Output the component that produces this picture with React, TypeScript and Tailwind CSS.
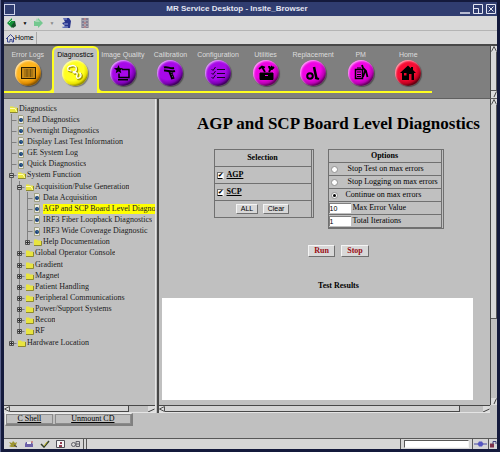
import { useState, type ReactNode } from "react";

type TreeNode = { label: string; level: number; kind: "leaf" | "open" | "closed" };

const TREE: TreeNode[] = [
  { label: "Diagnostics", level: 0, kind: "open" },
  { label: "End Diagnostics", level: 1, kind: "leaf" },
  { label: "Overnight Diagnostics", level: 1, kind: "leaf" },
  { label: "Display Last Test Information", level: 1, kind: "leaf" },
  { label: "GE System Log", level: 1, kind: "leaf" },
  { label: "Quick Diagnostics", level: 1, kind: "leaf" },
  { label: "System Function", level: 1, kind: "open" },
  { label: "Acquisition/Pulse Generation", level: 2, kind: "open" },
  { label: "Data Acquisition", level: 3, kind: "leaf" },
  { label: "AGP and SCP Board Level Diagnostics", level: 3, kind: "leaf" },
  { label: "IRF3 Fiber Loopback Diagnostics", level: 3, kind: "leaf" },
  { label: "IRF3 Wide Coverage Diagnostic", level: 3, kind: "leaf" },
  { label: "Help Documentation", level: 3, kind: "closed" },
  { label: "Global Operator Console", level: 2, kind: "closed" },
  { label: "Gradient", level: 2, kind: "closed" },
  { label: "Magnet", level: 2, kind: "closed" },
  { label: "Patient Handling", level: 2, kind: "closed" },
  { label: "Peripheral Communications", level: 2, kind: "closed" },
  { label: "Power/Support Systems", level: 2, kind: "closed" },
  { label: "Recon", level: 2, kind: "closed" },
  { label: "RF", level: 2, kind: "closed" },
  { label: "Hardware Location", level: 1, kind: "closed" },
];

const ORANGE = "bg-[radial-gradient(circle_at_40%_35%,#ffb51f_45%,#e08c00_62%,#8a5600_72%)]";
const YELLOW = "bg-[radial-gradient(circle_at_40%_35%,#ffff20_50%,#e8e000_64%,#9a9400_72%)]";
const PURPLE = "bg-[radial-gradient(circle_at_40%_35%,#a808e8_45%,#7c00b4_62%,#40005e_72%)]";
const MAGENTA = "bg-[radial-gradient(circle_at_40%_35%,#f004e4_45%,#bb00b4_62%,#66005f_72%)]";
const RED = "bg-[radial-gradient(circle_at_40%_35%,#f80c34_45%,#c40020_62%,#640010_72%)]";

const TABS: { label: string; ball: string; icon: ReactNode }[] = [
  {
    label: "Error Logs",
    ball: ORANGE,
    icon: (
      <g fill="none" stroke="#2a1c00">
        <rect x="6.5" y="7.5" width="14" height="11" fill="#c98a18" />
        <path d="M9 10h9M9 12h9M9 14h9M9 16h9M12 9v8M15.500 9v8" stroke="#5c420c" strokeWidth=".6" />
      </g>
    ),
  },
  {
    label: "Diagnostics",
    ball: YELLOW,
    icon: (
      <g fill="none" strokeLinecap="round" strokeLinejoin="round">
        <path d="M7 11c-1-3 1-4 3-4M10 7c2-1 4 0 5 1M12 13c3 0 4-2 3-5M7 11l3 1M13 14c2-1 4 0 3 2s0 4 2 3 3-3 1-5" stroke="#aaa200" strokeWidth="2" />
        <path d="M6 10c-1-3 1-4 3-4M9 6c2-1 4 0 5 1M11 12c3 0 4-2 3-5M6 10l3 1M12 13c2-1 4 0 3 2s0 4 2 3 3-3 1-5" stroke="#fff" strokeWidth="1.300" />
      </g>
    ),
  },
  {
    label: "Image Quality",
    ball: PURPLE,
    icon: (
      <g fill="none" stroke="#000" strokeWidth="1.500">
        <path d="M12 9.500h7v8H9v-4M8 19.700h10" />
        <path d="M8.500 5l1.200 3 3.300.3-2.500 2 .8 3-2.800-1.700-2.800 1.700.8-3-2.500-2 3.300-.3z" fill="#000" stroke="none" />
      </g>
    ),
  },
  {
    label: "Calibration",
    ball: PURPLE,
    icon: (
      <g fill="none" stroke="#000">
        <path d="M7 7.500c3-1.500 6 1.500 10 .5M7 10.500c4-.5 6 2 11 .5" strokeWidth="2" />
        <path d="M13 11l3 8" strokeWidth="3.500" />
        <path d="M14 12l2 6" stroke="#8f60b0" strokeWidth=".8" strokeDasharray="1 1" />
      </g>
    ),
  },
  {
    label: "Configuration",
    ball: PURPLE,
    icon: (
      <g fill="none" stroke="#180028">
        <path d="M12 9.500h8M12 13.500h8M12 17.500h8" strokeWidth="1.200" />
        <path d="M6.500 9l1.500 1.500L10.500 7M6.500 13l1.500 1.500 2.500-3.500M6.500 17l1.500 1.500 2.500-3.500" />
      </g>
    ),
  },
  {
    label: "Utilities",
    ball: MAGENTA,
    icon: (
      <g fill="none" stroke="#000">
        <path d="M7 13h13v6.500H7z" fill="#000" />
        <path d="M12 15.500h3" stroke="#f004e4" />
        <path d="M6 9l3-2.500 3 1M9 7l3 5M19 6l-3 6M16 6c0 2 1 3 3 3l2-2" strokeWidth="1.800" />
      </g>
    ),
  },
  {
    label: "Replacement",
    ball: MAGENTA,
    icon: (
      <g fill="none" stroke="#000">
        <circle cx="10" cy="16" r="2.800" strokeWidth="2" />
        <path d="M14 7l2.500 11.500" strokeWidth="2.500" />
        <path d="M15 18l4 1" strokeWidth="2" />
      </g>
    ),
  },
  {
    label: "PM",
    ball: MAGENTA,
    icon: (
      <g fill="none" stroke="#000">
        <path d="M7.500 9.500h7v9h-7z" strokeWidth="1.500" />
        <path d="M9 12h4M9 14.500h4M9 16.500h4M9 8h4" />
        <path d="M14 5l1 3 3 3 1.500 6M17 11l-2 6" strokeWidth="1.800" />
      </g>
    ),
  },
  {
    label: "Home",
    ball: RED,
    icon: (
      <g>
        <path d="M13 5.500L5 13h2v7h12v-7h2l-3-3V7h-2v1.500z" />
        <path d="M9 13h2.500v2.500H9zM14 14h2.500v6H14z" fill="#e8082c" />
      </g>
    ),
  },
];

// true when the guide line at `depth` carries on below row `i`
function continues(i: number, depth: number) {
  for (let j = i + 1; j < TREE.length; j++) {
    if (TREE[j].level < depth) return false;
    if (TREE[j].level === depth) return true;
  }
  return false;
}

export default function App() {
  return (
    <div className="flex min-h-screen flex-col border-l border-[#5a628c] bg-[#141a3c] pt-0.5 pr-[3px] pb-[3px] pl-[3px] font-['Liberation_Serif',serif] text-[8px] leading-[10px] text-black">
      <TitleBar />
      <Toolbar />
      <nav className="flex h-[54px] border-t-2 border-[#484848] bg-[#7f7f7f]">
        <div className="flex-1">
          <TabStrip />
        </div>
        <VScroll thumb="flex-1" />
      </nav>
      <main className="flex flex-1 border-t border-[#606060] bg-[#c0c0c0]">
        <div className="flex w-[151px] shrink-0 flex-col">
          <div className="flex-1">
            <Tree />
          </div>
          <HScroll thumb="w-[119px]" />
        </div>
        <div className="w-[4px] shrink-0 border-r-2 border-l border-r-[#484848] border-l-[#e4e4e4]" />
        <div className="flex min-w-0 flex-1">
          <div className="flex min-w-0 flex-1 flex-col">
            <BoardDiagnostics />
            <HScroll thumb="mr-[23px] flex-1" />
          </div>
          <div className="flex pb-2">
            <VScroll thumb="h-[214px]" />
          </div>
        </div>
      </main>
      <footer className="bg-[#c0c0c0] px-px pb-3">
        <div className="flex w-32 border-t border-r-2 border-b-2 border-l border-t-[#ececec] border-r-[#808080] border-b-[#808080] border-l-[#ececec] text-center leading-[8px]">
          <a href="#shell" className="mr-0.5 flex-3 border border-[#8c8c8c] underline">C Shell</a>
          <a href="#unmount" className="flex-5 border border-[#8c8c8c] underline">Unmount CD</a>
        </div>
      </footer>
      <StatusBar />
    </div>
  );
}

function TitleBar() {
  return (
    <header className="flex h-[14px] items-center bg-[#303d70] text-[#e4e6f2]">
      <button aria-label="Window menu" className="h-[11px] w-[11px] border border-[#cfd4ea]" />
      <h1 className="flex-1 pr-px text-center font-['Liberation_Sans',sans-serif] text-[8px] font-bold">
        MR Service Desktop - Insite_Browser
      </h1>
      <div className="flex gap-[3px] pr-px">
        <button aria-label="Minimize">
          <svg width="10" height="10" className="block"><path d="M0 9h10" stroke="#e4e6f2" strokeWidth="1.500" /></svg>
        </button>
        <button aria-label="Restore">
          <svg width="10" height="10" className="block" fill="none" stroke="#e4e6f2"><path d="M.5.500h9v9h-9zM.5 4.500h5v5" /></svg>
        </button>
        <button aria-label="Close">
          <svg width="10" height="10" className="block" fill="none" stroke="#e4e6f2"><path d="M.5.500h9v9h-9zM2.500 2.500l5 5M7.500 2.500l-5 5" /></svg>
        </button>
      </div>
    </header>
  );
}

function Toolbar() {
  return (
    <div className="bg-[#d9d9d9] font-['Liberation_Sans',sans-serif] text-[7px]">
      <div className="flex h-[15px] items-center border-b border-[#b4b4b4] pl-0.5">
        <button aria-label="Back">
          <svg width="12" height="12" className="block">
            <path d="M1 6l5-5v3h3v5H6v2z" fill="#129438" />
            <path d="M5 9l4-5 1 5-3 2z" fill="#17542c" />
            <path d="M3 6l3-3" stroke="#8fe0a0" />
          </svg>
        </button>
        <span className="w-[14px] text-center text-[5px]">▼</span>
        <button aria-label="Forward">
          <svg width="12" height="12" className="block">
            <path d="M11 6L6 1v3H2v5h4v2z" fill="#74c890" />
            <path d="M3 5l2-4 3 4" fill="#a4d8b4" />
          </svg>
        </button>
        <span className="w-4 text-center text-[5px] text-[#888]">▼</span>
        <button aria-label="Reload">
          <svg width="12" height="12" className="block">
            <path d="M3 1h6l2 3-1 7H2l3-2-3-3 3-1z" fill="#28348c" />
            <path d="M3 2l4 0M4 7h4M2 10h6" stroke="#9aa8dc" />
          </svg>
        </button>
        <button aria-label="Stop loading" className="ml-2">
          <svg width="10" height="12" className="block">
            <path d="M1 1h8v10H1z" fill="#a6a4ae" />
            <path d="M3 1v10M7 1v10" stroke="#5c587c" strokeDasharray="2 1" />
            <path d="M5 1v10" stroke="#c46464" strokeDasharray="2 2" />
          </svg>
        </button>
      </div>
      <div className="flex h-[13px] items-center">
        <a href="#home" className="flex h-3 items-center border-r border-[#a8a8a8] pr-0.5 pl-px">
          <svg width="10" height="10" className="block" fill="none" stroke="#3c4890">
            <path d="M1 6l4.500-4.500L10 6M2.500 5v4H5V6.500h2V9h1.500V5" />
          </svg>
          Home
        </a>
      </div>
    </div>
  );
}

function TabStrip() {
  const [active, setActive] = useState("Diagnostics");
  return (
    <div className="grid h-[47px] w-[428px] grid-cols-9 font-['Liberation_Sans',sans-serif] text-[7px] leading-[8px]">
      {TABS.map((tab) => {
        const on = tab.label === active;
        return (
          <button
            key={tab.label}
            onClick={() => setActive(tab.label)}
            className={`relative flex flex-col items-center gap-px border-[#ffff20] whitespace-nowrap ${
              on ? "rounded-t-md border-x-2 border-t-2 bg-[#c0c0c0] pt-[3px] text-black" : "border-b-2 pt-[5px] text-[#dcdcdc]"
            }`}
          >
            {on && (
              <>
                <span className="absolute bottom-0 -left-[6px] h-[6px] w-[6px] rounded-br-md border-r-2 border-b-2 border-[#ffff20]" />
                <span className="absolute -right-[6px] bottom-0 h-[6px] w-[6px] rounded-bl-md border-b-2 border-l-2 border-[#ffff20]" />
              </>
            )}
            {tab.label}
            <span className={`h-[26px] w-[26px] shrink-0 rounded-full shadow-[inset_1px_1px_2px_#ffffffb0,1px_1px_1px_#00000060] ${tab.ball}`}>
              <svg viewBox="0 0 26 26" className="block h-full w-full">{tab.icon}</svg>
            </span>
          </button>
        );
      })}
    </div>
  );
}

function Tree() {
  const [selected, setSelected] = useState("AGP and SCP Board Level Diagnostics");
  return (
    <ul className="flex h-[249px] flex-col pt-[4px] pl-1 text-[#202020]">
      {TREE.map((node, i) => (
        <li key={node.label} className="flex min-h-0 flex-1 items-center">
          {Array.from({ length: node.level }, (_, d) => (
            <Guide
              key={d}
              below={continues(i, d + 1)}
              own={d + 1 === node.level}
              box={d + 1 === node.level && node.kind !== "leaf" ? node.kind : undefined}
            />
          ))}
          <span className="flex w-[11px] shrink-0 pl-px">
            {node.kind === "leaf" ? <PageIcon /> : <FolderIcon open={node.kind === "open"} />}
          </span>
          <button
            onClick={() => setSelected(node.label)}
            className={`overflow-hidden text-left whitespace-nowrap ${
              node.label === selected ? "flex-1 bg-[#ffff00]" : ""
            }`}
          >
            {node.label}
          </button>
        </li>
      ))}
    </ul>
  );
}

function Guide({ below, own, box }: { below: boolean; own: boolean; box?: "open" | "closed" }) {
  return (
    <svg viewBox="0 0 8 12" className="h-3 w-2 shrink-0 overflow-visible" fill="none" stroke="#808080">
      {(below || own) && <path d={below ? "M3.500 0v12" : "M3.500 0v6"} />}
      {own && <path d="M3.500 6.500h5" />}
      {box && <path d="M1.500 4.500h4v4h-4z" fill="#c0c0c0" stroke="#505050" />}
      {box && <path d={box === "open" ? "M2 6.500h3" : "M2 6.500h3M3.500 5v3"} stroke="#303030" />}
    </svg>
  );
}

function FolderIcon({ open }: { open: boolean }) {
  return (
    <svg width="9" height="8" className="block">
      <path d="M1 1.500h3l1 1h3V7H1z" fill="#e8e440" />
      <path d="M1 7.500h7.500V3" fill="none" stroke="#8c8830" />
      {open && <path d="M1 3.500h5L8 7" fill="none" stroke="#fffdb0" />}
    </svg>
  );
}

function PageIcon() {
  return (
    <svg width="8" height="9" className="block">
      <path d="M1.500.500h4l1 1v7h-5z" fill="#ecece0" stroke="#8a8a60" strokeWidth=".7" />
      <circle cx="4" cy="5" r="2" fill="#183878" />
      <path d="M3.500 4.500h1v1" stroke="#40a090" fill="none" strokeWidth=".7" />
    </svg>
  );
}

function VScroll({ thumb }: { thumb: string }) {
  return (
    <div className="flex w-[7px] shrink-0 flex-col justify-between border-l border-[#484848] bg-[#c0c0c0]">
      <div className="flex flex-1 flex-col">
        <svg width="6" height="6" className="block"><path d="M0 0h6v6H0z" fill="#dcdcdc" /><path d="M.5 5.500L3 .5l2.500 5" fill="none" stroke="#505050" /></svg>
        <div className={`border-r border-b border-[#585858] bg-[#d8d8d8] ${thumb}`} />
      </div>
      <svg width="6" height="7" className="block"><path d="M0 0h6v7H0z" fill="#dcdcdc" /><path d="M5.500.500L3 6" stroke="#404040" /></svg>
    </div>
  );
}

function HScroll({ thumb }: { thumb: string }) {
  return (
    <div className="flex h-[8px] shrink-0 border-t border-b border-t-[#484848] border-b-[#e4e4e4] bg-[#c0c0c0]">
      <svg width="6" height="6" className="block shrink-0"><path d="M0 0h6v6H0z" fill="#dcdcdc" /><path d="M5.500.500L.5 3l5 2.500z" fill="none" stroke="#505050" /></svg>
      <div className={`border-r border-b border-[#484848] bg-[#d4d4d4] ${thumb}`} />
      <svg width="7" height="6" className="ml-auto block shrink-0"><path d="M0 0h7v6H0z" fill="#dcdcdc" /><path d="M6.500 3L0 6" stroke="#404040" /></svg>
    </div>
  );
}

const CELL = "border-b border-[#707070]";
const RADIO =
  "h-[7px] w-[7px] shrink-0 appearance-none rounded-full border border-[#909090] bg-white checked:before:block checked:before:h-[3px] checked:before:w-[3px] checked:before:translate-x-px checked:before:translate-y-px checked:before:rounded-full checked:before:bg-black checked:before:content-['']";
const PUSH = "border border-t-[#f4f4f4] border-r-[#707070] border-b-[#707070] border-l-[#f4f4f4] bg-[#d8d8d8]";

function BoardDiagnostics() {
  const [boards, setBoards] = useState<string[]>(["AGP", "SCP"]);
  const [mode, setMode] = useState("Continue on max errors");

  function toggle(name: string) {
    setBoards((prev) => (prev.includes(name) ? prev.filter((b) => b !== name) : [...prev, name]));
  }

  return (
    <section className="flex flex-1 flex-col overflow-hidden">
      <h2 className="-mr-7 pt-[15px] text-center text-[17px] leading-5 font-bold whitespace-nowrap">
        AGP and SCP Board Level Diagnostics
      </h2>
      <div className="mt-[15px] flex items-start justify-center gap-3.5 pl-2">
        <table className="w-[100px] border-separate border-spacing-0 border border-[#707070] pr-px">
          <thead>
            <tr>
              <th className={`h-[17px] border-r p-0 ${CELL}`}>Selection</th>
            </tr>
          </thead>
          <tbody>
            {["AGP", "SCP"].map((name) => (
              <tr key={name}>
                <td className={`h-[17px] border-r p-0 ${CELL}`}>
                  <label className="flex items-center gap-[3px] pl-0.5 font-bold underline">
                    <input
                      type="checkbox"
                      checked={boards.includes(name)}
                      onChange={() => toggle(name)}
                      className="h-[7px] w-[7px] appearance-none border border-t-[#707070] border-r-[#e8e8e8] border-b-[#e8e8e8] border-l-[#707070] bg-white checked:before:block checked:before:text-[6px] checked:before:leading-[5px] checked:before:content-['✔']"
                    />
                    {name}
                  </label>
                </td>
              </tr>
            ))}
            <tr>
              <td className="h-4 border-r border-[#707070] p-0">
                <div className="flex justify-center gap-[5px] font-['Liberation_Sans',sans-serif] text-[7px] leading-[8px]">
                  <button onClick={() => setBoards(["AGP", "SCP"])} className={`w-[22px] ${PUSH}`}>ALL</button>
                  <button onClick={() => setBoards([])} className={`w-[26px] ${PUSH}`}>Clear</button>
                </div>
              </td>
            </tr>
          </tbody>
        </table>

        <table className="w-[116px] border-separate border-spacing-0 border border-[#707070] pr-px">
          <thead>
            <tr>
              <th className={`h-[13px] border-r p-0 ${CELL}`}>Options</th>
            </tr>
          </thead>
          <tbody>
            {["Stop Test on max errors", "Stop Logging on max errors", "Continue on max errors"].map((opt) => (
              <tr key={opt}>
                <td className={`h-[13px] border-r p-0 ${CELL}`}>
                  <label className={`flex items-center pl-[2px] whitespace-nowrap ${opt.startsWith("Stop") ? "gap-[10px]" : "gap-2"}`}>
                    <input type="radio" name="mode" checked={mode === opt} onChange={() => setMode(opt)} className={RADIO} />
                    {opt}
                  </label>
                </td>
              </tr>
            ))}
            {[
              { label: "Max Error Value", value: "10" },
              { label: "Total Iterations", value: "1" },
            ].map((field) => (
              <tr key={field.label}>
                <td className={`h-[13px] border-r p-0 ${CELL}`}>
                  <label className="flex items-center gap-0.5">
                    <input
                      type="text"
                      defaultValue={field.value}
                      className="h-[10px] w-[22px] border-t border-l border-[#808080] bg-white font-['Liberation_Sans',sans-serif] text-[7px]"
                    />
                    {field.label}
                  </label>
                </td>
              </tr>
            ))}
          </tbody>
        </table>
      </div>

      <div className="-mr-7 mt-4 flex justify-center gap-1.5 font-bold text-[#980c14]">
        <button className={`w-[27px] ${PUSH}`}>Run</button>
        <button className={`w-[28px] ${PUSH}`}>Stop</button>
      </div>
      <label htmlFor="results" className="-mr-7 mt-6 text-center font-bold">Test Results</label>
      <textarea id="results" readOnly className="mt-[7px] mr-[17px] mb-[5px] ml-[3px] block min-h-[100px] flex-1 resize-none bg-white" />
    </section>
  );
}

function StatusBar() {
  return (
    <div className="flex h-[11px] shrink-0 items-stretch border-t border-[#585858] bg-[#d6d6d6]">
      <div className="flex w-[80px] items-center gap-[6px] border-r border-[#585858] pl-1">
        <button aria-label="Navigator">
          <svg width="10" height="8" className="block"><path d="M1 2l3 1 1-2 2 2 2-1-1 3 1 2H3L1 6l2-1z" fill="#9c9430" /><path d="M6 5l3 2" stroke="#443c58" /></svg>
        </button>
        <button aria-label="Mail">
          <svg width="10" height="8" className="block"><path d="M2 2h5l2 2v3H1V4z" fill="#6c60a8" /><path d="M3 2h4v2H3z" fill="#f0f0f0" /><path d="M7 2h2" stroke="#c04848" /></svg>
        </button>
        <button aria-label="Composer">
          <svg width="10" height="8" className="block"><path d="M1 4l3 3 5-6" fill="none" stroke="#34402c" strokeWidth="1.500" /><path d="M4 6l3-4" stroke="#c8bc30" /></svg>
        </button>
        <button aria-label="Address book">
          <svg width="9" height="8" className="block"><path d="M.5.500h8v7h-8z" fill="#f4f4f4" stroke="#505058" /><path d="M3 5h3v2H3zM4 2h2v2H4z" fill="#903c50" /></svg>
        </button>
        <button aria-label="Chat">
          <svg width="9" height="8" className="block" fill="none" stroke="#606068"><circle cx="2.500" cy="4.500" r="2" /><path d="M5 1.500h3.500v5H5zM5 4h3" /></svg>
        </button>
      </div>
      <div className="ml-0.5 flex-1 border-r border-l border-r-[#585858] border-l-[#585858]" />
      <input aria-label="Progress" readOnly className="mx-[3px] my-px w-[65px] border border-t-[#585858] border-r-[#f4f4f4] border-b-[#f4f4f4] border-l-[#585858] bg-white" />
      <div className="flex items-center border-l border-[#585858] px-px">
        <svg width="13" height="8" className="block"><path d="M0 4h13" stroke="#4848a0" /><path d="M5 1.500h3l1.500 2.500L8 6.500H5L3.500 4z" fill="#5454c0" /></svg>
      </div>
      <div className="flex items-center border-l border-[#585858]">
        <svg width="8" height="8" className="block"><path d="M1 3.500h4v4H1z" fill="#7c3048" /><path d="M4 4V1.500h3V4" fill="none" stroke="#3c3c78" /></svg>
      </div>
    </div>
  );
}
